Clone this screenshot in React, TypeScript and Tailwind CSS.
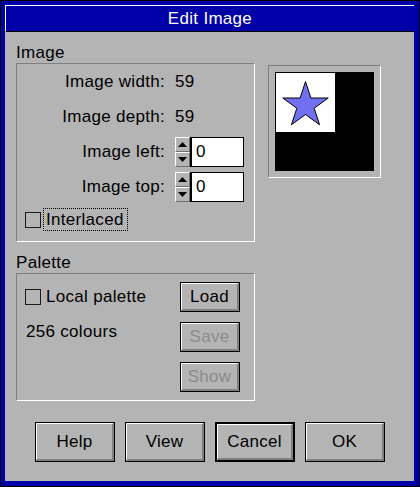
import React from "react";

const font = "font-['Liberation_Sans',Arial,sans-serif] tracking-[0.3px]";

const PushButton = ({
  label,
  disabled = false,
  isDefault = false,
  className = "",
}: {
  label: string;
  disabled?: boolean;
  isDefault?: boolean;
  className?: string;
}) => (
  <div
    className={`${isDefault ? "border-2" : "border"} border-black bg-[#b4b4b4] ${className}`}
  >
    <div className="h-full w-full border-l border-t border-white border-r-2 border-b-2 border-r-[#808080] border-b-[#808080] flex items-center justify-center">
      <span
        className={`text-[17px] leading-none ${disabled ? "text-[#8c8c8c]" : "text-black"}`}
      >
        {label}
      </span>
    </div>
  </div>
);

const CheckBox = () => (
  <div className="w-[16px] h-[16px] border border-[#1a1a1a] bg-[#b4b4b4] shrink-0" />
);

const ArrowButton = ({ up }: { up: boolean }) => (
  <div className="h-[15px] w-[15px] bg-[#b4b4b4] border-l border-t border-white border-r border-b border-r-[#707070] border-b-[#707070] flex items-center justify-center">
    <svg width="9" height="5" viewBox="0 0 9 5">
      {up ? (
        <polygon points="0,5 9,5 4.5,0" fill="black" />
      ) : (
        <polygon points="0,0 9,0 4.5,5" fill="black" />
      )}
    </svg>
  </div>
);

const Spinner = ({ value }: { value: string }) => (
  <div className="flex h-[30px]">
    <div className="flex flex-col w-[15px]">
      <ArrowButton up />
      <ArrowButton up={false} />
    </div>
    <div className="w-[54px] h-[30px] bg-white border border-black border-l-2 pl-[4px] flex items-center text-[17px]">
      {value}
    </div>
  </div>
);

const rows = [
  { label: "Image width:", value: "59" },
  { label: "Image depth:", value: "59" },
];

export default function App() {
  return (
    <div className={`w-[420px] h-[487px] bg-black p-px ${font}`}>
      <div className="w-full h-full bg-[#0000a8] pt-[4px] pl-[4px] pr-[5px] pb-[5px]">
        <div className="w-full h-full flex flex-col bg-[#b4b4b4]">
          <div className="h-[27px] bg-[#0000a8] border-t border-l border-white border-b border-b-black flex items-center justify-center text-white text-[17px] leading-none">
            Edit Image
          </div>

          <div className="flex px-[11px]">
            <div className="w-[239px] flex flex-col">
              <div className="mt-[10px] h-[21px] leading-[21px] text-[17px]">Image</div>
              <div className="h-[179px] border-t border-l border-[#808080] border-b border-r border-b-white border-r-white pt-[3px]">
                <div className="grid grid-cols-[148px_1fr] gap-x-[10px] gap-y-[5px]">
                  {rows.map((r) => (
                    <React.Fragment key={r.label}>
                      <div className="h-[30px] flex items-center justify-end text-[17px]">
                        {r.label}
                      </div>
                      <div className="h-[30px] flex items-center text-[17px]">{r.value}</div>
                    </React.Fragment>
                  ))}
                  <div className="h-[30px] flex items-center justify-end text-[17px]">
                    Image left:
                  </div>
                  <Spinner value="0" />
                  <div className="h-[30px] flex items-center justify-end text-[17px]">
                    Image top:
                  </div>
                  <Spinner value="0" />
                </div>
                <div className="mt-[6px] pl-[8px] h-[23px] flex items-center">
                  <CheckBox />
                  <div className="ml-[2px] h-[23px] w-[85px] border border-dotted border-black px-[2px] flex items-center text-[17px]">
                    Interlaced
                  </div>
                </div>
              </div>

              <div className="mt-[10px] h-[21px] leading-[21px] text-[17px]">Palette</div>
              <div className="h-[128px] border-t border-l border-[#808080] border-b border-r border-b-white border-r-white flex justify-between pt-[8px] pl-[8px] pr-[14px]">
                <div className="flex flex-col">
                  <div className="h-[30px] flex items-center gap-[5px] text-[17px]">
                    <CheckBox />
                    <span>Local palette</span>
                  </div>
                  <div className="mt-[10px] h-[20px] leading-[20px] text-[17px] pl-px">
                    256 colours
                  </div>
                </div>
                <div className="flex flex-col gap-[10px]">
                  <PushButton label="Load" className="w-[60px] h-[30px]" />
                  <PushButton label="Save" disabled className="w-[60px] h-[30px]" />
                  <PushButton label="Show" disabled className="w-[60px] h-[30px]" />
                </div>
              </div>
            </div>

            <div className="ml-[13px] mt-[33px] w-[113px] h-[113px] border-t border-l border-[#808080] border-b border-r border-b-white border-r-white p-[6px]">
              <div className="w-[99px] h-[99px] bg-black p-px">
                <div className="w-[59px] h-[59px] bg-white">
                  <svg width="59" height="59" viewBox="0 0 59 59">
                    <polygon
                      points="29.5,8.5 34.87,25.01 52.23,25.01 38.18,35.22 43.55,51.74 29.5,41.53 15.45,51.74 20.82,35.22 6.77,25.01 24.13,25.01"
                      fill="#7070f0"
                      stroke="black"
                      strokeWidth="1"
                    />
                  </svg>
                </div>
              </div>
            </div>
          </div>

          <div className="mt-[21px] pl-[30px] flex gap-[10px]">
            <PushButton label="Help" className="w-[80px] h-[40px]" />
            <PushButton label="View" className="w-[80px] h-[40px]" />
            <PushButton label="Cancel" isDefault className="w-[80px] h-[40px]" />
            <PushButton label="OK" className="w-[80px] h-[40px]" />
          </div>
        </div>
      </div>
    </div>
  );
}
